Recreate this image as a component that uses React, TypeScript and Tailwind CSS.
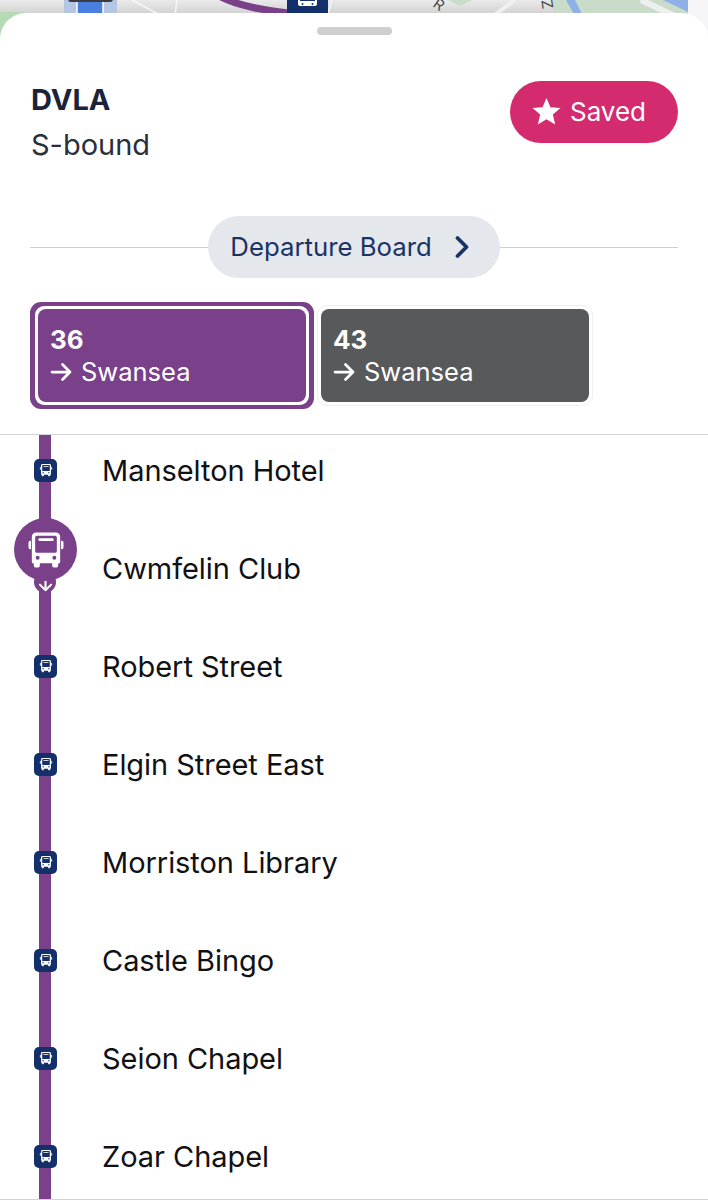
import { ChevronRight } from "lucide-react";

const stops = [
  "Manselton Hotel",
  "Cwmfelin Club",
  "Robert Street",
  "Elgin Street East",
  "Morriston Library",
  "Castle Bingo",
  "Seion Chapel",
  "Zoar Chapel",
];

function BusGlyph({ className }: { className?: string }) {
  return (
    <svg viewBox="0 0 24 24" className={className} fill="currentColor">
      <path
        fillRule="evenodd"
        d="M6 1.500h12A2.500 2.500 0 0 1 20.500 4v15a1 1 0 0 1-1.200 1v1.500a1 1 0 0 1-1 1h-1.600a1 1 0 0 1-1-1V20h-7.400v1.500a1 1 0 0 1-1 1H5.700a1 1 0 0 1-1-1V20a1 1 0 0 1-1.200-1V4A2.500 2.500 0 0 1 6 1.500ZM6.500 3.500a1 1 0 0 0-1 1v8.200a1 1 0 0 0 1 1h11a1 1 0 0 0 1-1V4.500a1 1 0 0 0-1-1h-11ZM7 15.400a1.200 1.200 0 1 0 0 2.400 1.200 1.200 0 0 0 0-2.400Zm10 0a1.200 1.200 0 1 0 0 2.400 1.200 1.200 0 0 0 0-2.400Z"
      />
      <rect x="7.500" y="5" width="9" height="1.600" rx="0.500" />
      <path d="M1.500 7.500a1 1 0 0 1 1-1h.500v5h-.500a1 1 0 0 1-1-1v-3Zm21 0a1 1 0 0 0-1-1H21v5h.500a1 1 0 0 0 1-1v-3Z" />
    </svg>
  );
}

function Arrow({ className }: { className?: string }) {
  return (
    <svg viewBox="0 0 22 20" className={className} fill="none" stroke="currentColor" strokeWidth="2.750" strokeLinecap="round" strokeLinejoin="round">
      <path d="M2 10h18M12.500 2.500 20 10l-7.500 7.500" />
    </svg>
  );
}

function MapStrip() {
  return (
    <svg viewBox="0 0 708 40" className="absolute top-0 left-0 w-[708px] h-[40px]">
      <defs>
        <linearGradient id="mapFade" x1="0" y1="0" x2="0" y2="1">
          <stop offset="0" stopColor="#eaeaea" />
          <stop offset="0.35" stopColor="#d2d2d4" />
          <stop offset="1" stopColor="#d2d2d4" />
        </linearGradient>
      </defs>
      <rect width="708" height="40" fill="url(#mapFade)" />
      <path d="M0 12h24v28H0Z" fill="#b5dbb4" />
      <path d="M553 0h135v40H553Z" fill="#c9dcc9" />
      <path d="M688 0h20v40h-20Z" fill="#f6f6f8" />
      <path d="M566 0l8 14h8l-7-14Z" fill="#8fb0e6" />
      <path d="M663 0l25 12V0Z" fill="#8fb0e6" />
      <path d="M641 0l42 20" stroke="#ecefee" strokeWidth="6" fill="none" />
      <path d="M448 0h24l-12 6Z" fill="#c9dcc9" />
      <path d="M515 0l-22 16" stroke="#f0f0f0" strokeWidth="4" fill="none" />
      <path d="M132 0l30 16M177 0l-2 16M332 0l-5 16" stroke="#f5f5f5" strokeWidth="1.500" fill="none" />
      <path d="M219 -4C238 6 262 10 288 13" stroke="#7a418a" strokeWidth="7" fill="none" />
      <rect x="64" y="0" width="53" height="20" fill="#b4c6e4" />
      <rect x="77" y="0" width="26" height="20" fill="#4a7fe0" stroke="#fff" strokeWidth="1.500" />
      <rect x="68" y="-8" width="45" height="10" rx="3" fill="#3c3c40" />
      <rect x="287" y="-8" width="41" height="26" fill="#14306a" />
      <g transform="translate(298 -6)">
        <rect x="0" y="0" width="19" height="12" rx="2" fill="#fff" />
        <rect x="2" y="2" width="15" height="5" fill="#14306a" />
        <circle cx="4.500" cy="10" r="1" fill="#14306a" />
        <circle cx="14.500" cy="10" r="1" fill="#14306a" />
      </g>
      <text x="432" y="6" transform="rotate(35 432 6)" className="font-['Inter',sans-serif]" fontSize="15" fill="#4a4b50">R</text>
      <text x="538" y="8" transform="rotate(82 544 6)" className="font-['Inter',sans-serif]" fontSize="15" fill="#4a4b50">Z</text>
    </svg>
  );
}

function RouteTab({ number, selected }: { number: string; selected?: boolean }) {
  const body = (
    <div className={`w-[268px] h-[93px] rounded-[8px] pl-[12px] pt-[15px] text-white ${selected ? "bg-[#7a418a]" : "bg-[#58595b]"}`}>
      <div className="text-[26px] leading-[32px] font-bold">{number}</div>
      <div className="flex items-center gap-[9px] text-[25.500px] leading-[32px]">
        <Arrow className="w-[22px] h-[20px]" />
        <span>Swansea</span>
      </div>
    </div>
  );
  if (selected) {
    return (
      <div className="rounded-[11px] bg-[#7a418a] px-[5px] py-[4px]">
        <div className="rounded-[9px] bg-white p-[3px]">{body}</div>
      </div>
    );
  }
  return <div className="ml-[3px] self-center rounded-[10px] border border-[#eeeef0] p-[3px]">{body}</div>;
}

export default function App() {
  return (
    <div className="relative w-[708px] h-[1200px] overflow-hidden font-['Inter',sans-serif]">
      <MapStrip />
      <div className="relative mt-[13px] h-[1187px] flex flex-col rounded-t-[26px] bg-white">
        <div className="mx-auto mt-[14px] w-[75px] h-[8px] rounded-full bg-[#cfcfd1]" />

        <div className="flex justify-between pl-[31px] pr-[30px] mt-[46px]">
          <div>
            <div className="text-[29px] leading-[40px] font-bold text-[#1a2338] -mt-[1px]">DVLA</div>
            <div className="text-[29px] leading-[40px] text-[#2a2f3c] mt-[5px]">S-bound</div>
          </div>
          <div className="w-[168px] h-[62px] rounded-full bg-[#d42b6f] text-white flex items-center justify-center gap-[9px] pr-[10px] pb-[1px] text-[26px]">
            <svg viewBox="0 0 28 28" className="w-[29px] h-[29px]" fill="currentColor">
              <path d="M14 1l3.800 8.900 9.700.8-7.400 6.300 2.300 9.500L14 21.400l-8.400 5.100 2.300-9.500L.5 10.700l9.700-.8Z" />
            </svg>
            <span>Saved</span>
          </div>
        </div>

        <div className="flex items-center mx-[30px] mt-[51px]">
          <div className="flex-1 h-[1px] bg-[#ccd0d6]" />
          <div className="w-[292px] h-[62px] rounded-full bg-[#e4e7ec] text-[#1a3365] flex items-center justify-center gap-[12px] pl-[2px] text-[25.750px]">
            <span>Departure Board</span>
            <ChevronRight className="w-[36px] h-[36px]" strokeWidth={2.500} />
          </div>
          <div className="flex-1 h-[1px] bg-[#ccd0d6]" />
        </div>

        <div className="flex mt-[24px] mx-[30px]">
          <RouteTab number="36" selected />
          <RouteTab number="43" />
        </div>

        <div className="mt-[25px] h-[1px] bg-[#d4d4d6]" />

        <div className="relative flex-1 overflow-hidden">
          <div className="absolute left-[39px] top-0 bottom-0 w-[12px] bg-[#7a418a]" />
          <div className="relative -mt-[14px]">
            {stops.map((name) => (
              <div key={name} className="flex items-center h-[98px]">
                <div className="w-[103px] flex-none">
                  <div className="ml-[34px] w-[23px] h-[23px] rounded-[5px] bg-[#14306a] flex items-center justify-center text-white">
                    <BusGlyph className="w-[14px] h-[14px]" />
                  </div>
                </div>
                <div className="-ml-[1px] mt-[1px] text-[29px] tracking-[-0.05px] text-[#111114]">{name}</div>
              </div>
            ))}
          </div>

          {/* current bus position */}
          <div className="absolute left-[34px] top-[136px] w-[22px] h-[22px] rounded-full bg-[#7a418a] flex items-center justify-center text-white">
            <Arrow className="w-[17px] h-[15px] rotate-90 mt-[3px]" />
          </div>
          <div className="absolute left-[14px] top-[83px] w-[63px] h-[63px] rounded-full bg-[#7a418a] flex items-center justify-center text-white">
            <BusGlyph className="w-[40px] h-[40px]" />
          </div>

          <div className="absolute left-0 right-0 bottom-0 h-[1px] bg-[#d4d4d6]" />
        </div>
      </div>
    </div>
  );
}
